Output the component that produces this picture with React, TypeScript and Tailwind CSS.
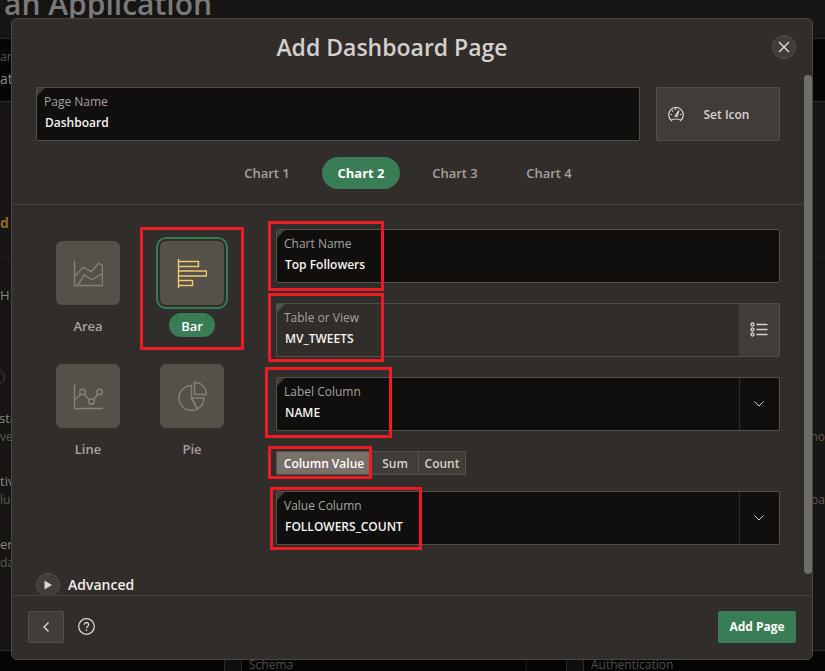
import { useState, type ReactNode } from "react";

const ring = "pointer-events-none absolute z-10 border-[3px] border-[#ed1c24]";

function Corner({ color }: { color: string }) {
  return (
    <svg aria-hidden="true" className="pointer-events-none absolute top-0 left-0 size-2" viewBox="0 0 8 8">
      <path d="M0 0H8L0 8Z" fill={color} />
    </svg>
  );
}

type FieldProps = {
  id: string;
  label: string;
  children: ReactNode;
  muted?: boolean;
  addon?: ReactNode;
  mark?: string;
};

function Field({ id, label, children, muted, addon, mark }: FieldProps) {
  return (
    <div className="relative min-w-0 flex-1">
      <div
        className={`relative flex h-[54px] overflow-hidden rounded-[2px] border border-[#55514a] ${
          muted ? "bg-[#312d2a]" : "bg-[#100f0d]"
        }`}
      >
        <Corner color={muted ? "#55514c" : "#403d39"} />
        <div className="flex min-w-0 flex-1 flex-col pt-1 pl-[7px]">
          <label htmlFor={id} className="text-[12px] leading-5 font-medium text-[#a5a29f]">
            {label}
          </label>
          {children}
        </div>
        {addon}
      </div>
      {mark && <span aria-hidden="true" className={`${ring} ${mark}`} />}
    </div>
  );
}

const control =
  "w-full appearance-none bg-transparent pl-px text-[12px] leading-[22px] h-[22px] font-semibold text-[#f5f4f2] outline-none";

function SelectField({ id, label, value, mark }: { id: string; label: string; value: string; mark: string }) {
  return (
    <Field
      id={id}
      label={label}
      mark={mark}
      addon={
        <span className="pointer-events-none flex w-10 items-center justify-center border-l border-[#312e2b] pr-0.5">
          <svg className="h-[6px] w-[10px]" viewBox="0 0 10 6" fill="none" stroke="#d5d2cf">
            <path d="M0.5 0.5L5 5L9.5 0.5" />
          </svg>
        </span>
      }
    >
      <select id={id} className={control} defaultValue={value}>
        <option>{value}</option>
      </select>
    </Field>
  );
}

const charts = {
  Area: (
    <>
      <path d="M1.500 2V26.500H29.500V6.500L25.300 4.300L18.700 12.700L10.300 8.300L2 17" />
      <path d="M5 26L11 16L18.700 20.500L29 15" />
    </>
  ),
  Bar: (
    <>
      <path d="M1.500 0V29" />
      <path d="M2 2.500H21.500V7.500H2M2 12H29.500V17H2M2 21.500H15.500V26.500H2" />
    </>
  ),
  Line: (
    <>
      <path d="M1.500 2V26.500H30" />
      <path d="M2 17.500L8 12M11.500 12.500L16.500 18M20.500 17.500L25 12" />
      <circle cx="9.500" cy="10" r="2.800" />
      <circle cx="18.500" cy="19.500" r="2.800" />
      <circle cx="26.500" cy="10" r="2.800" />
    </>
  ),
  Pie: (
    <>
      <path d="M14.500 3.500A12.500 12.500 0 1 0 20.500 27L14.500 16Z" />
      <path d="M14.500 16H27C27 20.500 24.500 24.500 20.500 27Z" />
      <path d="M17.500 0.500C24.500 0.500 29.500 5.500 29.500 12.500H17.500Z" />
    </>
  ),
};

type ChartKind = keyof typeof charts;

function ChartTile({ kind, selected, onSelect }: { kind: ChartKind; selected: boolean; onSelect: () => void }) {
  return (
    <button type="button" aria-pressed={selected} onClick={onSelect} className="flex h-[123px] flex-col items-center gap-2 pt-3">
      <span
        className={`flex size-16 shrink-0 items-center justify-center rounded-[6px] bg-[#55514a] ${
          selected ? "outline-2 outline-offset-2 outline-[#347c51]" : ""
        }`}
      >
        <svg
          className="size-[30px]"
          viewBox="0 -1 30 30"
          fill="none"
          stroke={selected ? "#f0cc71" : "#85807b"}
          strokeWidth="1.4"
        >
          {charts[kind]}
        </svg>
      </span>
      <span
        className={`h-6 rounded-full px-3 text-[13px] leading-[26px] font-semibold ${
          selected ? "bg-[#387d54] text-white" : "text-[#a5a29f]"
        }`}
      >
        {kind}
      </span>
    </button>
  );
}

function Backdrop() {
  return (
    <div aria-hidden="true" className="absolute inset-0 flex flex-col overflow-hidden bg-[#161513] text-[13px] leading-5 text-[#8a8784]">
      <div className="h-[38px] pl-1 text-[30px] leading-[8px] font-semibold text-[#7c7a78]">an Application</div>
      <div className="h-16 border-y border-[#2c2927] bg-[#050505] pt-2">
        <div className="text-[12px] text-[#5c5a58]">ar</div>
        <div className="pt-0.5 text-[14px]">at</div>
      </div>
      <div className="h-[156px] border-b border-[#22201e] pt-[111px] text-[14px] font-bold text-[#8a6b2c]">d</div>
      <div className="flex flex-1 flex-col pt-[27px]">
        <div>H</div>
        <div className="mt-16 -ml-[11px] size-4 rounded-full border border-[#3d3b39]" />
        <div className="mt-[23px] -ml-px">sta</div>
        <div className="-mt-px flex justify-between text-[12px] text-[#5c5a56]">
          <span>ve</span>
          <span>ho</span>
        </div>
        <div className="mt-6">tiv</div>
        <div className="-mt-px flex justify-between text-[12px] text-[#5c5a56]">
          <span>lu</span>
          <span>ba</span>
        </div>
        <div className="mt-6">er</div>
        <div className="-mt-px text-[12px] text-[#5c5a56]">da</div>
      </div>
      <div className="flex h-[21px] border-t border-[#2c2927] bg-[#050505] pl-[224px] text-[12px] leading-[27px] text-[#4f4d4b]">
        <span className="mr-[7px] w-[18px] border-x border-[#292623] bg-[#100f0e]" />
        <span className="mr-[39px] w-[278px] border-r border-[#1a1817]">Schema</span>
        <span className="mr-[7px] w-[18px] border-x border-[#292623] bg-[#100f0e]" />
        <span>Authentication</span>
      </div>
    </div>
  );
}

const tabs = ["Chart 1", "Chart 2", "Chart 3", "Chart 4"];
const aggregates = [
  { name: "Column Value", width: "w-24" },
  { name: "Sum", width: "w-12" },
  { name: "Count", width: "w-12" },
];
const kinds: ChartKind[] = ["Area", "Bar", "Line", "Pie"];

export default function App() {
  const [tab, setTab] = useState("Chart 2");
  const [kind, setKind] = useState<ChartKind>("Bar");
  const [aggregate, setAggregate] = useState("Column Value");

  return (
    <div className="relative flex h-screen flex-col overflow-hidden pt-[18px] pr-3 pb-[11px] pl-[11px] font-['Open_Sans','Noto_Sans',sans-serif]">
      <Backdrop />
      <div
        role="dialog"
        aria-labelledby="dialog-title"
        className="relative flex min-h-0 flex-1 flex-col overflow-hidden rounded-[6px] border border-[#4a4641] bg-[#312d2a]"
      >
        <header className="flex h-14 shrink-0 items-center pr-4">
          <h1 id="dialog-title" className="flex-1 text-center text-[23px] leading-8 font-semibold text-[#d3d0cd]">
            Add Dashboard Page
          </h1>
          <button
            type="button"
            aria-label="Close"
            className="flex size-6 items-center justify-center rounded-full border border-[#55514a] bg-[#403c38]"
          >
            <svg className="size-3" viewBox="0 0 12 12" fill="none" stroke="#d8d5d2" strokeWidth="1.5">
              <path d="M1 1L11 11M11 1L1 11" />
            </svg>
          </button>
        </header>

        <div className="relative min-h-0 flex-1 overflow-hidden pr-2">
          <div className="flex gap-4 px-6 pt-3">
            <Field id="page-name" label="Page Name">
              <input id="page-name" className={control} defaultValue="Dashboard" />
            </Field>
            <button
              type="button"
              className="flex w-[124px] items-center rounded-[2px] border border-[#55514a] bg-[#403c38] pl-[11px] text-[12px] font-semibold text-[#d8d5d2]"
            >
              <svg className="size-4" viewBox="0 0 16 16" fill="none" stroke="currentColor" strokeWidth="1.2">
                <path d="M3.500 14.500A7.300 7.300 0 1 1 12.500 14.500Q12 13 8 13T3.500 14.500Z" />
                <path d="M7 10L11 4.500L9 10.500Z" />
                <path d="M2.500 8.500H4M4 4.500L5 5.500M7.500 2.500V4M12 8.500H13.500" />
              </svg>
              <span className="flex-1 pt-0.5 pr-2.5 text-center">Set Icon</span>
            </button>
          </div>

          <div role="tablist" className="flex justify-center gap-4 border-b border-[#45413d] pt-4 pb-[15px]">
            {tabs.map((name) => (
              <button
                key={name}
                type="button"
                role="tab"
                aria-selected={name === tab}
                onClick={() => setTab(name)}
                className={`h-8 w-[78px] rounded-full text-[13px] leading-8 ${
                  name === tab ? "bg-[#387d54] font-bold text-white" : "font-semibold text-[#a5a29f]"
                }`}
              >
                {name}
              </button>
            ))}
          </div>

          <div className="flex gap-8 px-6 pt-6">
            <div className="relative grid w-52 shrink-0 grid-cols-2 content-start">
              {kinds.map((name) => (
                <ChartTile key={name} kind={name} selected={name === kind} onSelect={() => setKind(name)} />
              ))}
              <span aria-hidden="true" className={`${ring} -top-0.5 left-[104px] h-[123px] w-[104px]`} />
            </div>

            <div className="flex min-w-0 flex-1 flex-col">
              <div className="flex flex-col gap-5">
                <Field id="chart-name" label="Chart Name" mark="-top-2 -left-2 h-[70px] w-[116px]">
                  <input id="chart-name" className={control} defaultValue="Top Followers" />
                </Field>
                <Field
                  id="table-view"
                  label="Table or View"
                  muted
                  mark="-top-2.5 -left-2 h-[69px] w-[116px]"
                  addon={
                    <button
                      type="button"
                      aria-label="Choose table or view"
                      className="flex w-10 items-center justify-center bg-[#403c38] pb-0.5"
                    >
                      <svg className="h-[15px] w-[18px]" viewBox="0 0 18 15" fill="none" stroke="#d5d2cf" strokeWidth="1.3">
                        <circle cx="2.500" cy="2.500" r="1.500" />
                        <circle cx="2.500" cy="7.500" r="1.500" />
                        <circle cx="2.500" cy="12.500" r="1.500" />
                        <path d="M6.500 2.500H17.500M6.500 7.500H17.500M6.500 12.500H17.500" />
                      </svg>
                    </button>
                  }
                >
                  <input id="table-view" className={control} defaultValue="MV_TWEETS" readOnly />
                </Field>
                <SelectField
                  id="label-column"
                  label="Label Column"
                  value="NAME"
                  mark="-top-2.5 -left-[11px] h-[71px] w-[127px]"
                />
              </div>
              <div role="group" aria-label="Aggregation" className="relative mt-5 mb-4 flex h-6">
                {aggregates.map(({ name, width }, i) => (
                  <button
                    key={name}
                    type="button"
                    aria-pressed={name === aggregate}
                    onClick={() => setAggregate(name)}
                    className={`border border-[#55514a] text-[12px] leading-6 font-semibold ${width} ${i > 0 ? "-ml-px" : ""} ${
                      name === aggregate ? "bg-[#79706a] text-white" : "bg-[#403c38] text-[#d3d0cd]"
                    }`}
                  >
                    {name}
                  </button>
                ))}
                <span aria-hidden="true" className={`${ring} -top-[5px] -left-2 h-[33px] w-[104px]`} />
              </div>
              <SelectField
                id="value-column"
                label="Value Column"
                value="FOLLOWERS_COUNT"
                mark="-top-1 -left-1.5 h-[63px] w-[152px]"
              />
            </div>
          </div>

          <button type="button" className="mx-6 mt-7 flex items-center gap-2 text-[14px] leading-6 font-semibold text-[#efedeb]">
            <span className="flex size-6 items-center justify-center rounded-full border border-[#55514a] bg-[#403c38]">
              <svg className="h-[10px] w-2" viewBox="0 0 8 10" fill="#d8d5d2">
                <path d="M0.500 0.500L8 5L0.500 9.500Z" />
              </svg>
            </span>
            Advanced
          </button>

          <span aria-hidden="true" className="absolute top-0 right-0 bottom-[21px] w-2 rounded-full bg-[#6f6d69]" />
        </div>

        <footer className="flex h-16 shrink-0 items-center border-t border-[#45413d] px-4 pb-0.5">
          <button
            type="button"
            aria-label="Previous"
            className="flex h-8 w-9 items-center justify-center rounded-[2px] border border-[#55514a] bg-[#403c38]"
          >
            <svg className="h-[10px] w-[6px]" viewBox="0 0 6 10" fill="none" stroke="#d8d5d2" strokeWidth="1.4">
              <path d="M5.500 0.500L1 5L5.500 9.500" />
            </svg>
          </button>
          <button type="button" aria-label="Help" className="ml-[14px]">
            <svg className="size-[17px]" viewBox="0 0 17 17" fill="none" stroke="#d8d5d2" strokeWidth="1.3">
              <circle cx="8.500" cy="8.500" r="7.800" />
              <path d="M6.300 6.800C6.300 3.800 10.700 3.800 10.700 6.600C10.700 8.300 8.500 8.300 8.500 10.300" />
              <path d="M8.500 11.500V13" />
            </svg>
          </button>
          <button
            type="button"
            className="ml-auto h-8 w-[78px] rounded-[2px] bg-[#387d54] text-[12px] leading-8 font-bold text-white"
          >
            Add Page
          </button>
        </footer>
      </div>
    </div>
  );
}
